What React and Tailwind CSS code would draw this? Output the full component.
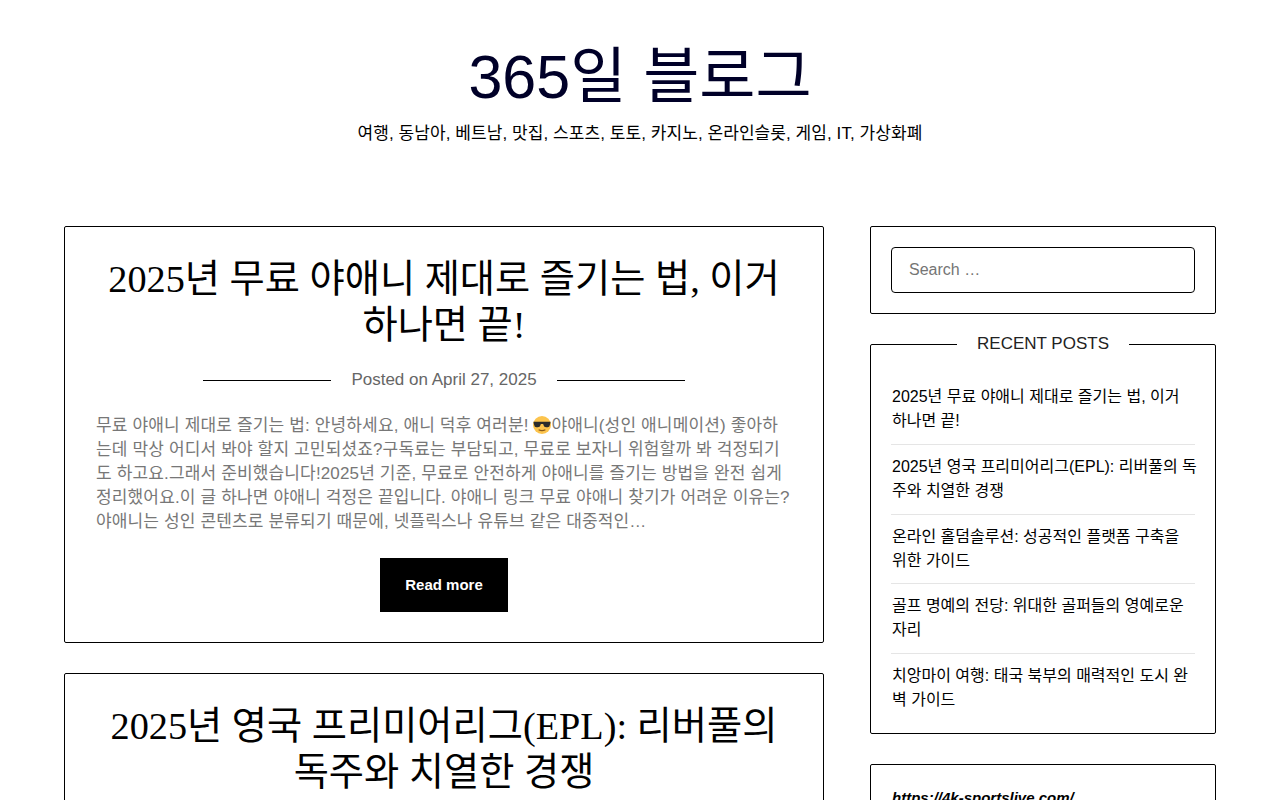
const recentPosts = [
  '2025년 무료 야애니 제대로 즐기는 법, 이거\n하나면 끝!',
  '2025년 영국 프리미어리그(EPL): 리버풀의 독\n주와 치열한 경쟁',
  '온라인 홀덤솔루션: 성공적인 플랫폼 구축을\n위한 가이드',
  '골프 명예의 전당: 위대한 골퍼들의 영예로운\n자리',
  '치앙마이 여행: 태국 북부의 매력적인 도시 완\n벽 가이드',
];

function Sunglasses() {
  return (
    <svg viewBox="0 0 16 16" className="inline-block w-[18px] h-[18px] align-[-3px]">
      <circle cx="8" cy="8" r="8" fill="#fcc44d" />
      <path d="M0.5 5h15v1.2l-1 3.2c-.3.7-3.6.9-4.6 0L9 7H7l-.9 2.4c-1 .9-4.3.7-4.6 0l-1-3.2z" fill="#2b2b2b" />
      <path d="M5 12.2c2 1 4 1 6 0" stroke="#8a5a1c" strokeWidth="1" fill="none" />
    </svg>
  );
}

function PostTitle({ children }) {
  return (
    <h2 className="text-center text-[38.25px] leading-[46px] text-black font-normal font-['Liberation_Serif','Noto_Sans_CJK_KR',serif]">
      {children}
    </h2>
  );
}

export default function App() {
  return (
    <div className="h-[800px] overflow-hidden bg-white text-[17px] font-['Liberation_Sans','Noto_Sans_CJK_KR',sans-serif]">
      {/* Site header */}
      <header className="h-[226px] pt-[41px] text-center">
        <h1 className="text-[61px] leading-[72px] font-normal text-[#000028]">365일 블로그</h1>
        <p className="mt-[9px] leading-6 text-black tracking-[0.07px]">
          여행, 동남아, 베트남, 맛집, 스포츠, 토토, 카지노, 온라인슬롯, 게임, IT, 가상화폐
        </p>
      </header>

      <div className="flex justify-between px-[64px]">
        {/* Posts */}
        <main className="w-[760px] flex flex-col gap-[30px]">
          <article className="border border-black rounded-[2px] px-[31px] pt-[29px] pb-[30px]">
            <PostTitle>2025년 무료 야애니 제대로 즐기는 법, 이거 하나면 끝!</PostTitle>
            <div className="mt-[20px] flex items-center justify-center gap-[20px] leading-6 text-[#666666]">
              <span className="w-[128px] border-t border-black" />
              <span>Posted on April 27, 2025</span>
              <span className="w-[128px] border-t border-black" />
            </div>
            <p className="mt-[22px] leading-6 text-[#777777] tracking-[0.15px]">
              무료 야애니 제대로 즐기는 법: 안녕하세요, 애니 덕후 여러분! <Sunglasses />야애니(성인 애니메이션) 좋아하는데 막상 어디서 봐야 할지 고민되셨죠?구독료는 부담되고, 무료로 보자니 위험할까 봐 걱정되기도 하고요.그래서 준비했습니다!2025년 기준, 무료로 안전하게 야애니를 즐기는 방법을 완전 쉽게 정리했어요.이 글 하나면 야애니 걱정은 끝입니다. 야애니 링크 무료 야애니 찾기가 어려운 이유는? 야애니는 성인 콘텐츠로 분류되기 때문에, 넷플릭스나 유튜브 같은 대중적인…
            </p>
            <div className="mt-[24px] flex justify-center">
              <a className="w-[128px] h-[54px] flex items-center justify-center bg-black text-white text-[15px] font-bold">
                Read more
              </a>
            </div>
          </article>

          <article className="border border-black rounded-[2px] px-[31px] pt-[29px] pb-[30px]">
            <PostTitle>2025년 영국 프리미어리그(EPL): 리버풀의 독주와 치열한 경쟁</PostTitle>
          </article>
        </main>

        {/* Sidebar */}
        <aside className="w-[346px] flex flex-col gap-[30px]">
          <div className="border border-black rounded-[2px] p-[20px]">
            <input
              placeholder="Search …"
              className="w-full h-[46px] border border-black rounded-[4px] pl-[17px] text-base text-black placeholder:text-[#757575] outline-none"
            />
          </div>

          <div className="relative border border-black rounded-[2px] px-[20px] pt-[40px] pb-[21px]">
            <h3 className="absolute -top-[13px] left-[86px] w-[172px] bg-white text-center leading-6 font-normal text-[#222222]">
              RECENT POSTS
            </h3>
            <ul>
              {recentPosts.map((title, i) => (
                <li key={title} className={i === 0 ? 'pb-[11px]' : 'border-t-[1px] border-[#e5e5e5] pt-[10.3px] pb-[10.3px] last:pb-0'}>
                  <a className="block pl-px text-base leading-6 text-black whitespace-pre">{title}</a>
                </li>
              ))}
            </ul>
          </div>

          <div className="border border-black rounded-[2px] px-[20px] pt-[21px] pb-[20px]">
            <a className="block pl-px text-[15px] leading-6 font-bold italic text-black">https://4k-sportslive.com/</a>
          </div>
        </aside>
      </div>
    </div>
  );
}
